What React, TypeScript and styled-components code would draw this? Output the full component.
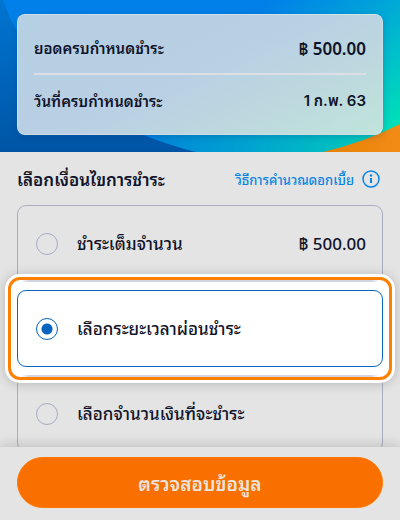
import React, { useState } from "react";
import styled, { createGlobalStyle } from "styled-components";

const GlobalStyle = createGlobalStyle`
  *, *::before, *::after { box-sizing: border-box; }
  body {
    margin: 0;
    background: #e4e4e4;
    color: #10142b;
    font-family: "Noto Sans", "Noto Sans Thai Looped", "Sarabun", "Loma", "Waree", "Umpush", "Garuda", "Noto Sans Thai", sans-serif;
  }
`;

const Page = styled.div`
  display: flex;
  flex-direction: column;
  height: 100vh;
  overflow: hidden;
`;

const Hero = styled.header`
  position: relative;
  padding: 14px 17px 17px;
`;

const HeroArt = styled.svg`
  position: absolute;
  inset: 0;
  width: 100%;
  height: 100%;
`;

const Summary = styled.dl`
  position: relative;
  margin: 0;
  padding: 8px 16px 7px;
  border: 1px solid rgba(225, 229, 233, 0.55);
  border-radius: 8px;
  background: linear-gradient(155deg, #b5d0e2 0%, #b9cfe4 45%, #bcd7df 70%, #c0e4da 100%);
  box-shadow: 0 2px 7px rgba(0, 45, 110, 0.22);
`;

const SummaryRow = styled.div<{ $ruled?: boolean }>`
  display: flex;
  align-items: center;
  justify-content: space-between;
  height: 52px;
  border-bottom: ${(p) => (p.$ruled ? "2px solid #dcdfe6" : "0")};
`;

const Term = styled.dt`
  padding-bottom: 2px;
  font-size: 15px;
  font-weight: 600;
`;

const Detail = styled.dd<{ $kind: "amount" | "date" }>`
  margin: 0;
  padding-bottom: ${(p) => (p.$kind === "date" ? 0 : 2)}px;
  font-family: ${(p) => (p.$kind === "date" ? '"Inter", "Noto Sans Thai", sans-serif' : "inherit")};
  font-size: ${(p) => (p.$kind === "date" ? 15 : 17)}px;
  font-weight: 600;
`;

const Content = styled.main`
  flex: 1;
  min-height: 0;
  overflow: hidden;
  padding: 12px 17px 0;
`;

const SectionHead = styled.div`
  display: flex;
  align-items: center;
  justify-content: space-between;
  height: 32px;
  margin-bottom: 9px;
`;

const Title = styled.h1`
  margin: 0;
  padding-bottom: 4px;
  font-size: 17px;
  font-weight: 600;
`;

const HelpLink = styled.a`
  display: flex;
  align-items: center;
  gap: 8px;
  padding: 0 3px 2px 0;
  color: #0884e4;
  font-size: 13px;
  font-weight: 500;
  text-decoration: none;
`;

const Options = styled.div`
  display: grid;
  gap: 8px;
`;

const Option = styled.label<{ $selected: boolean }>`
  position: relative;
  z-index: ${(p) => (p.$selected ? 1 : 0)};
  display: flex;
  align-items: center;
  gap: 19px;
  height: 77px;
  padding: 0 16px 0 18px;
  border: 1px solid ${(p) => (p.$selected ? "#0868bd" : "#a9afc1")};
  border-radius: 9px;
  background: ${(p) => (p.$selected ? "#fff" : "transparent")};
  font-size: 17px;
  font-weight: 500;
  cursor: pointer;
`;

const Highlight = styled.span`
  position: absolute;
  z-index: -1;
  inset: -14px -10px;
  border: 3px solid #ff8000;
  border-radius: 12px;
  background:
    linear-gradient(90deg, #fff, #d2d5e0 8px calc(100% - 8px), #fff) center top / calc(100% - 20px) 2px no-repeat,
    linear-gradient(90deg, #fff, #d2d5e0 8px calc(100% - 8px), #fff) center bottom / calc(100% - 20px) 2px no-repeat,
    #fff;
  background-origin: padding-box;
  box-shadow: 0 0 0 3px #fff, 0 1px 12px 3px rgba(0, 0, 0, 0.2);

  &::after {
    content: "";
    position: absolute;
    inset: 10px 6px;
    border: 1px solid #0868bd;
    border-radius: 9px;
    background: #fff;
  }
`;

const Radio = styled.input`
  flex: none;
  appearance: none;
  width: 22px;
  height: 22px;
  margin: 0;
  border: 1px solid #a5adc2;
  border-radius: 50%;
  cursor: pointer;

  &:checked {
    border-color: #0864b8;
    background: radial-gradient(circle, #0864be 5px, #fff 6px);
  }
`;

const OptionText = styled.span`
  padding-bottom: 3px;
`;

const Amount = styled(OptionText)`
  margin-left: auto;
`;

const Footer = styled.footer`
  position: relative;
  z-index: 2;
  padding: 10px 17px 12px;
  background: #e4e4e4;
  box-shadow: 0 -2px 12px rgba(0, 0, 0, 0.16);
`;

const Submit = styled.button`
  display: block;
  width: 100%;
  height: 51px;
  padding: 0;
  border: 1px solid #ff7900;
  border-radius: 26px;
  background: #f97000;
  color: #ece4dc;
  font: inherit;
  font-size: 19px;
  font-weight: 600;
  cursor: pointer;
`;

const choices = [
  { id: "full", label: "ชำระเต็มจำนวน", amount: "฿ 500.00" },
  { id: "term", label: "เลือกระยะเวลาผ่อนชำระ" },
  { id: "custom", label: "เลือกจำนวนเงินที่จะชำระ" },
];

function HeroBackdrop() {
  return (
    <HeroArt viewBox="0 0 400 152" preserveAspectRatio="none" aria-hidden="true">
      <defs>
        <linearGradient id="base" gradientUnits="userSpaceOnUse" x1="270" y1="0" x2="400" y2="120">
          <stop offset="0" stopColor="#0080e8" />
          <stop offset="0.5" stopColor="#00a6d8" />
          <stop offset="1" stopColor="#00dfb8" />
        </linearGradient>
        <linearGradient id="deep" x1="0" y1="0" x2="0" y2="1">
          <stop offset="0" stopColor="#0075d2" />
          <stop offset="1" stopColor="#0055a5" />
        </linearGradient>
        <linearGradient id="sweep" gradientUnits="userSpaceOnUse" x1="140" y1="0" x2="390" y2="0">
          <stop offset="0" stopColor="#0082da" />
          <stop offset="0.45" stopColor="#00a5cf" />
          <stop offset="1" stopColor="#00cfb8" />
        </linearGradient>
        <linearGradient id="sun" x1="0" y1="0" x2="1" y2="0">
          <stop offset="0" stopColor="#e58200" />
          <stop offset="1" stopColor="#f38b18" />
        </linearGradient>
      </defs>
      <path d="M0 0H400V152H0Z" fill="url(#base)" />
      <path d="M0 0H3C28 70 88 125 197 152H0Z" fill="url(#deep)" />
      <path d="M140 130H383V152H197Q165 145 140 130Z" fill="url(#sweep)" />
      <path d="M323 152Q365 142 400 124V152Z" fill="url(#sun)" />
    </HeroArt>
  );
}

export default function App() {
  const [selected, setSelected] = useState("term");

  return (
    <>
      <GlobalStyle />
      <Page>
        <Hero>
          <HeroBackdrop />
          <Summary>
            <SummaryRow $ruled>
              <Term>ยอดครบกำหนดชำระ</Term>
              <Detail $kind="amount">฿ 500.00</Detail>
            </SummaryRow>
            <SummaryRow>
              <Term>วันที่ครบกำหนดชำระ</Term>
              <Detail $kind="date">1 ก.พ. 63</Detail>
            </SummaryRow>
          </Summary>
        </Hero>
        <Content>
          <SectionHead>
            <Title id="terms">เลือกเงื่อนไขการชำระ</Title>
            <HelpLink href="#interest">
              วิธีการคำนวณดอกเบี้ย
              <svg width="18" height="18" viewBox="0 0 18 18" fill="none" aria-hidden="true">
                <circle cx="9" cy="9" r="8" stroke="currentColor" strokeWidth="1.5" />
                <path d="M9 8V13" stroke="currentColor" strokeWidth="2" />
                <circle cx="9" cy="5.5" r="1.2" fill="currentColor" />
              </svg>
            </HelpLink>
          </SectionHead>
          <Options role="radiogroup" aria-labelledby="terms">
            {choices.map((c) => (
              <Option key={c.id} htmlFor={c.id} $selected={selected === c.id}>
                {selected === c.id && <Highlight />}
                <Radio
                  type="radio"
                  id={c.id}
                  name="payment"
                  checked={selected === c.id}
                  onChange={() => setSelected(c.id)}
                />
                <OptionText>{c.label}</OptionText>
                {c.amount && <Amount>{c.amount}</Amount>}
              </Option>
            ))}
          </Options>
        </Content>
        <Footer>
          <Submit type="button">ตรวจสอบข้อมูล</Submit>
        </Footer>
      </Page>
    </>
  );
}
